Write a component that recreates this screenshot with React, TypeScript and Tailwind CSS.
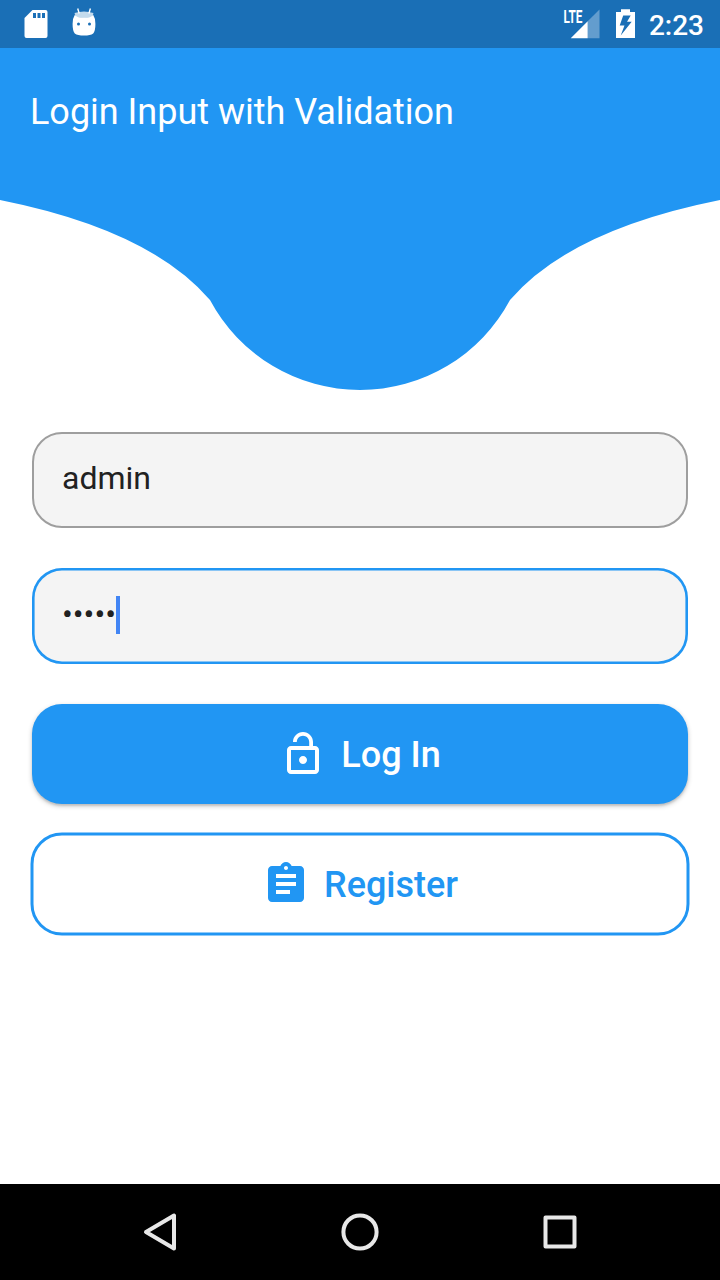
import React from "react";

function StatusBar() {
  return (
    <div className="flex h-12 items-center justify-between bg-[#1a6fb6] text-white">
      <div className="flex items-center">
        <svg className="h-12 w-12" viewBox="0 0 48 48">
          <path
            fillRule="evenodd"
            fill="white"
            d="M32.5 10H45.5Q47.5 10 47.5 12V36Q47.5 38 45.5 38H26.5Q24.5 38 24.5 36V18ZM33 13V18H36V13ZM37.5 13V18H40.5V13ZM42 13V18H45V13Z"
          />
        </svg>
        <svg className="h-12 w-12" viewBox="48 0 48 48">
          <path d="M74.5 13Q84 10 93.500 13L92 17Q84 19 76 17Z" fill="#c3dbed" />
          <path d="M77.700 8.500L79.200 13.500M90.400 8.500L88.900 13.500" stroke="white" strokeWidth="1.4" />
          <path
            fill="white"
            d="M75 14.500Q76 17.800 84 17.800T93 14.500Q95.400 18 95.400 24Q95.400 31 93.200 33.500Q90.500 35.500 84 35.500T74.800 33.500Q72.600 31 72.600 24Q72.600 18 75 14.500Z"
          />
          <circle cx="78.500" cy="24" r="1.5" fill="#1a6fb6" />
          <circle cx="89.500" cy="24" r="1.5" fill="#1a6fb6" />
        </svg>
      </div>
      <div className="flex items-center pr-4">
        <svg className="h-12 w-[90px]" viewBox="558 0 90 48">
          <text x="563.500" y="22.500" fontFamily="Roboto" fontWeight="700" fontSize="17.5" textLength="19" lengthAdjust="spacingAndGlyphs" fill="white">LTE</text>
          <path d="M599.500 9.500V38.300H587.700V21.300Z" fill="#639dce" />
          <path d="M587.700 21.300V38.300H570.700Z" fill="white" />
          <path
            fill="white"
            fillRule="evenodd"
            d="M621 9.300H630V12H635V38H616V12H621ZM623.200 15.500L619.700 25.500H624.500L620.700 35.500L631.700 21.700H627L630.700 15.500Z"
          />
        </svg>
        <span className="w-14 pt-1 text-right text-[28px] leading-[44px] font-medium">2:23</span>
      </div>
    </div>
  );
}

function Header() {
  return (
    <header className="grid h-[342px]">
      <svg className="col-start-1 row-start-1 h-[342px] w-[720px]" viewBox="0 48 720 342">
        <path d="M0 48V200Q150 230 210 300A170 170 0 0 0 510 300Q570 230 720 200V48Z" fill="#2196f3" />
      </svg>
      <h1 className="z-10 col-start-1 row-start-1 pt-[43px] pl-[30px] text-[36px] leading-[42px] font-normal tracking-[-0.02px] text-white">
        Login Input with Validation
      </h1>
    </header>
  );
}

function NavigationBar() {
  return (
    <nav className="flex h-24 items-center justify-center gap-[152px] bg-black">
      <svg className="size-12" viewBox="136 1208 48 48" fill="none" stroke="#e8e8e8" strokeWidth="4" strokeLinejoin="round">
        <path d="M174 1215.500V1248.500L146 1232Z" />
      </svg>
      <svg className="size-12" viewBox="0 0 48 48" fill="none" stroke="#e8e8e8" strokeWidth="4">
        <circle cx="24" cy="24" r="16.600" />
      </svg>
      <svg className="size-12" viewBox="0 0 48 48" fill="none" stroke="#e8e8e8" strokeWidth="4" strokeLinejoin="round">
        <rect x="9.500" y="9.500" width="29" height="29" />
      </svg>
    </nav>
  );
}

export default function App() {
  return (
    <div className="flex h-[1280px] w-[720px] flex-col bg-white font-['Roboto',sans-serif]">
      <StatusBar />
      <Header />
      <main className="flex flex-1 flex-col px-8 pt-[42px]">
        <div className="flex h-24 items-center rounded-[30px] border-2 border-[#9e9e9e] bg-[#f4f4f4] pb-1 pl-7 text-[32px] text-[#212121]">
          admin
        </div>
        <div className="mt-10 flex h-24 items-center rounded-[30px] bg-[#f4f4f4] pb-1 pl-[30px] text-[32px] text-[#212121] inset-ring-[2.6px] inset-ring-[#2196f3]">
          <span>•••••</span>
          <span className="mt-[2px] h-[37.5px] w-1 bg-[#4285f4]" />
        </div>
        <button className="mt-10 flex h-[100px] items-center justify-center rounded-[30px] bg-[#2196f3] text-[36px] font-medium text-white shadow-[0_2px_2px_rgba(0,0,0,0.1),0_2px_5px_rgba(0,0,0,0.22)]">
          <svg className="mr-3.5 size-12" viewBox="0 0 24 24" fill="currentColor">
            <path d="M12 17c1.100 0 2-.9 2-2s-.9-2-2-2-2 .9-2 2 .9 2 2 2zm6-9h-1V6c0-2.760-2.240-5-5-5S7 3.240 7 6h1.900c0-1.710 1.390-3.100 3.100-3.100 1.710 0 3.100 1.390 3.100 3.100v2H6c-1.100 0-2 .9-2 2v10c0 1.100.9 2 2 2h12c1.100 0 2-.9 2-2V10c0-1.100-.9-2-2-2zm0 12H6V10h12v10z" />
          </svg>
          <span className="pt-[2px]">Log In</span>
        </button>
        <button className="relative mt-[30px] flex h-[100px] items-center justify-center rounded-[30px] text-[36px] font-medium text-[#2196f3] before:absolute before:-top-[2px] before:-left-[2px] before:h-[103px] before:w-[659px] before:translate-x-[0.5px] before:translate-y-[0.5px] before:rounded-[31.5px] before:border-[3px] before:border-[#2196f3] before:content-['']">
          <svg className="mr-3.5 size-12" viewBox="0 0 24 24" fill="currentColor">
            <path d="M19 3h-4.180C14.400 1.840 13.300 1 12 1c-1.300 0-2.400.84-2.820 2H5c-1.100 0-2 .9-2 2v14c0 1.100.9 2 2 2h14c1.100 0 2-.9 2-2V5c0-1.100-.9-2-2-2zm-7 0c.55 0 1 .45 1 1s-.45 1-1 1-1-.45-1-1 .45-1 1-1zm2 14H7v-2h7v2zm3-4H7v-2h10v2zm0-4H7V7h10v2z" />
          </svg>
          <span className="pt-[2px]">Register</span>
        </button>
      </main>
      <NavigationBar />
    </div>
  );
}
